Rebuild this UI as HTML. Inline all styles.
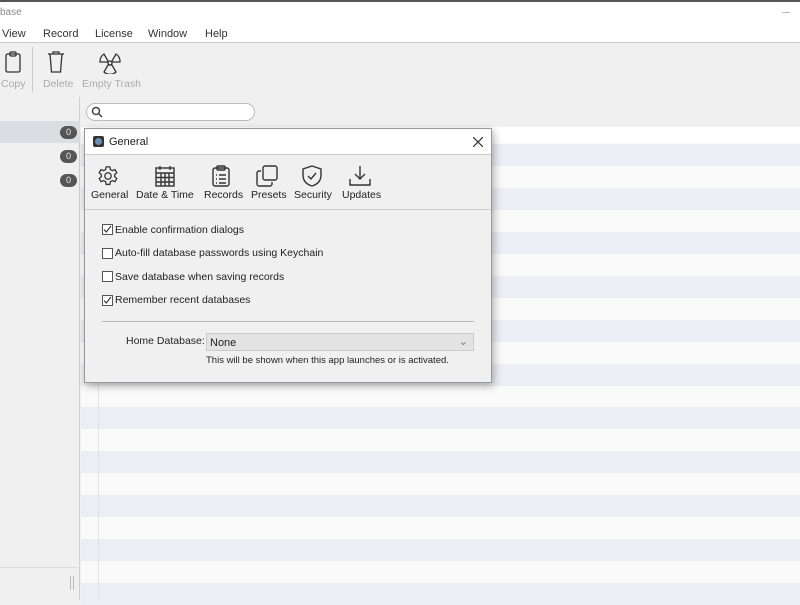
<!DOCTYPE html>
<html><head><style>
*{margin:0;padding:0;box-sizing:border-box}
body{width:800px;height:600px;overflow:hidden;background:#f0f0f0;font-family:"Liberation Sans",sans-serif;position:relative;font-size:11px;color:#222}
.abs{position:absolute}
.title{left:0;top:0;width:800px;height:43px;background:#fff;border-top:2px solid #555;border-bottom:1px solid #ccc}
.menu span{position:absolute;top:28px;font-size:11px;color:#333}
.tb{font-size:10.5px;color:#aaa}
.side{left:0;top:97px;width:80px;height:503px;background:#f0f0f0;border-right:1px solid #d0d0d0}
.badge{position:absolute;left:60px;width:17px;height:13px;border-radius:7px;background:#555;color:#eee;font-size:9px;text-align:center;line-height:13px}
.main{left:81px;top:127px;width:719px;height:473px;background:#fafafa}
.row{position:absolute;left:0;width:719px;height:22px;background:#ebeef5}
.dlg{left:84px;top:128px;width:408px;height:255px;background:#f0f0f0;border:1px solid #999;box-shadow:2px 3px 8px rgba(0,0,0,.3)}
.cb{position:absolute;left:17px;width:11px;height:11px;border:1px solid #555;background:#fff}
.lbl{position:absolute;left:30px;font-size:10.5px;color:#222}
.ic{position:absolute;top:36px}
.il{position:absolute;top:60px;font-size:10.5px;color:#222}
</style></head><body>
<div class="abs title"></div>
<div class="abs" style="left:0;top:7px;font-size:10px;color:#888">base</div>
<div class="abs" style="left:782px;top:12px;width:8px;height:1px;background:#bbb"></div>
<div class="menu"><span style="left:2px">View</span><span style="left:43px">Record</span><span style="left:95px">License</span><span style="left:148px">Window</span><span style="left:205px">Help</span></div>
<svg class="abs" style="left:4px;top:50px" width="18" height="24" viewBox="0 0 18 24" fill="none" stroke="#333" stroke-width="1.3"><rect x="2" y="4" width="14" height="18" rx="1.5"/><rect x="6" y="2" width="6" height="4" rx="1"/></svg>
<div class="abs tb" style="left:1px;top:78px">Copy</div>
<div class="abs" style="left:32px;top:47px;width:1px;height:45px;background:#ccc"></div>
<svg class="abs" style="left:46px;top:50px" width="20" height="24" viewBox="0 0 20 24" fill="none" stroke="#333" stroke-width="1.3"><path d="M2 4h16M7 4V2h6v2M4 4l1.5 18h9L16 4"/></svg>
<div class="abs tb" style="left:43px;top:78px">Delete</div>
<svg class="abs" style="left:98px;top:50px" width="24" height="24" viewBox="0 0 24 24" fill="none" stroke="#333" stroke-width="1.3"><circle cx="12" cy="13" r="2"/><path d="M10 11L6 4a9 9 0 0 0-4 8h8zM14 11l4-7a9 9 0 0 1 4 8h-8zM10 15l-4 7a9 9 0 0 0 12 0l-4-7z"/></svg>
<div class="abs tb" style="left:82px;top:78px">Empty Trash</div>
<div class="abs side"></div>
<div class="abs" style="left:0;top:121px;width:80px;height:22px;background:#dcdde3"></div>
<div class="badge" style="top:126px">0</div><div class="badge" style="top:150px">0</div><div class="badge" style="top:174px">0</div>
<div class="abs" style="left:0;top:567px;width:80px;height:1px;background:#ddd"></div>
<div class="abs" style="left:70px;top:576px;width:4px;height:14px;border-left:1px solid #bbb;border-right:1px solid #bbb"></div>
<div class="abs" style="left:86px;top:103px;width:169px;height:18px;border:1px solid #bbb;border-radius:9px;background:#fff"></div>
<svg class="abs" style="left:91px;top:106px" width="12" height="12" viewBox="0 0 12 12" fill="none" stroke="#444" stroke-width="1.5"><circle cx="5" cy="5" r="3.5"/><path d="M7.5 7.5L11 11"/></svg>
<div class="abs main">
<div class="abs" style="left:0;top:0;width:719px;height:16px;background:#fff"></div>
<div class="row" style="top:17px"></div><div class="row" style="top:61px"></div><div class="row" style="top:105px"></div><div class="row" style="top:149px"></div><div class="row" style="top:193px"></div><div class="row" style="top:237px"></div><div class="row" style="top:280px"></div><div class="row" style="top:324px"></div><div class="row" style="top:368px"></div><div class="row" style="top:412px"></div><div class="row" style="top:456px"></div>
<div class="abs" style="left:17px;top:0;width:1px;height:473px;background:#e3e3e3"></div>
</div>
<div class="abs dlg">
<div class="abs" style="left:0;top:0;width:406px;height:26px;background:#fff;border-bottom:1px solid #ccc"></div>
<div class="abs" style="left:8px;top:7px;width:11px;height:11px;border-radius:2px;background:#333"><div style="margin:2px;width:7px;height:7px;border-radius:50%;background:#6a8fb5"></div></div>
<div class="abs" style="left:24px;top:7px;font-size:11px">General</div>
<svg class="abs" style="left:388px;top:8px" width="10" height="10" viewBox="0 0 10 10" stroke="#333" stroke-width="1.2"><path d="M0 0L10 10M10 0L0 10"/></svg>
<svg class="ic" style="left:12px" width="22" height="22" viewBox="0 0 24 24" fill="none" stroke="#333" stroke-width="1.4"><circle cx="12" cy="12" r="3.5"/><path d="M10 2h4l.6 3 2.2 1.2 2.8-1.2 2 3.4-2.3 2v2.4l2.3 2-2 3.4-2.8-1.2-2.2 1.2-.6 3h-4l-.6-3-2.2-1.2-2.8 1.2-2-3.4 2.3-2v-2.4l-2.3-2 2-3.4 2.8 1.2L9.4 5z"/></svg>
<div class="il" style="left:6px">General</div>
<svg class="ic" style="left:70px" width="20" height="22" viewBox="0 0 20 22" fill="none" stroke="#333" stroke-width="1.4"><rect x="1" y="3" width="18" height="18"/><path d="M1 8h18M1 12.5h18M1 17h18M6 8v13M10 8v13M14 8v13M5 1v4M15 1v4"/></svg>
<div class="il" style="left:51px">Date &amp; Time</div>
<svg class="ic" style="left:127px" width="18" height="22" viewBox="0 0 18 22" fill="none" stroke="#333" stroke-width="1.4"><rect x="1" y="3" width="16" height="18" rx="2"/><rect x="5" y="1" width="8" height="4" rx="1"/><path d="M4 10h1M7 10h7M4 14h1M7 14h7M4 18h1M7 18h7"/></svg>
<div class="il" style="left:119px">Records</div>
<svg class="ic" style="left:171px" width="22" height="22" viewBox="0 0 22 22" fill="none" stroke="#333" stroke-width="1.4"><rect x="7" y="1" width="14" height="14" rx="2"/><path d="M5 6H3a2 2 0 0 0-2 2v11a2 2 0 0 0 2 2h11a2 2 0 0 0 2-2v-2"/></svg>
<div class="il" style="left:166px">Presets</div>
<svg class="ic" style="left:216px" width="22" height="22" viewBox="0 0 22 22" fill="none" stroke="#333" stroke-width="1.4"><path d="M11 1l9 3v6c0 6-4 9.5-9 11-5-1.5-9-5-9-11V4z"/><path d="M7 11l3 3 5-6"/></svg>
<div class="il" style="left:209px">Security</div>
<svg class="ic" style="left:264px" width="22" height="22" viewBox="0 0 22 22" fill="none" stroke="#333" stroke-width="1.4"><path d="M11 1v13M6 9l5 5 5-5M1 14v6h20v-6"/></svg>
<div class="il" style="left:257px">Updates</div>
<div class="abs" style="left:0;top:80px;width:406px;height:1px;background:#ccc"></div>
<div class="cb" style="top:95px"><svg width="9" height="9" viewBox="0 0 9 9" fill="none" stroke="#333" stroke-width="1.1" style="display:block"><path d="M1 4.5l2.3 2.5L8 1"/></svg></div><div class="lbl" style="top:95px">Enable confirmation dialogs</div>
<div class="cb" style="top:119px"></div><div class="lbl" style="top:118px">Auto-fill database passwords using Keychain</div>
<div class="cb" style="top:142px"></div><div class="lbl" style="top:142px">Save database when saving records</div>
<div class="cb" style="top:166px"><svg width="9" height="9" viewBox="0 0 9 9" fill="none" stroke="#333" stroke-width="1.1" style="display:block"><path d="M1 4.5l2.3 2.5L8 1"/></svg></div><div class="lbl" style="top:165px">Remember recent databases</div>
<div class="abs" style="left:17px;top:192px;width:372px;height:1px;background:#bbb"></div>
<div class="abs" style="left:41px;top:206px;font-size:10.5px">Home Database:</div>
<div class="abs" style="left:121px;top:204px;width:268px;height:18px;background:#e3e3e3;border:1px solid #ccc;padding:3px 3px;font-size:11px">None<span style="position:absolute;right:5px;top:1px;color:#777">⌄</span></div>
<div class="abs" style="left:121px;top:226px;font-size:9.5px">This will be shown when this app launches or is activated.</div>
</div>
</body></html>
